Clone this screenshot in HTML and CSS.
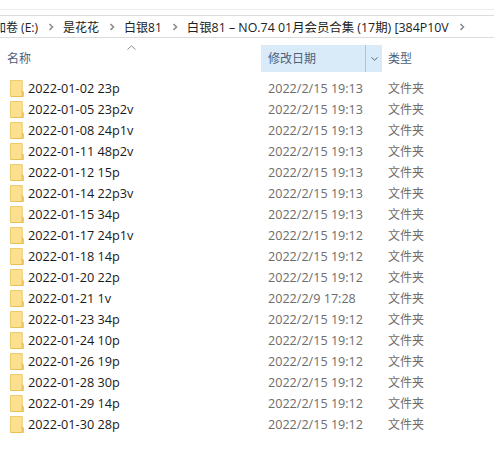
FILE: index.html
```html
<!DOCTYPE html>
<html lang="zh">
<head>
<meta charset="utf-8">
<title>文件夹</title>
<link rel="stylesheet" href="styles.css">
</head>
<body>
<svg class="defs" width="0" height="0" aria-hidden="true">
  <symbol id="folder" viewBox="0 0 14 17">
    <path d="M.5 .5H12.2V16.5H.5Z" fill="#fce08f" stroke="#eccb6b"/>
    <path d="M12.2 10.5L13.5 12V16.5H12.2Z" fill="#f6d36f" stroke="#e2bb55" stroke-width=".7"/>
    <path d="M1 16H13V17H1Z" fill="#eabf52"/>
  </symbol>
  <symbol id="sep" viewBox="0 0 6 8">
    <path d="M1.5 1L4.5 4L1.5 7" fill="none" stroke="#8b8b8b" stroke-width="1.6"/>
  </symbol>
</svg>
<div class="topline"></div>
<nav class="crumbs">
  <span class="crumb first">新加卷 (E:)</span>
  <svg class="sep"><use href="#sep"/></svg>
  <span class="crumb">是花花</span>
  <svg class="sep"><use href="#sep"/></svg>
  <span class="crumb">白银81</span>
  <svg class="sep"><use href="#sep"/></svg>
  <span class="crumb long">白银81 – NO.74 01月会员合集 (17期) [384P10V</span>
  <svg class="sep"><use href="#sep"/></svg>
</nav>
<main class="list">
  <div class="sort-arrow"><svg width="9" height="5" viewBox="0 0 9 5"><path d="M.5 4.5L4.5 .8L8.5 4.5" fill="none" stroke="#8d8d8d"/></svg></div>
  <header class="head">
    <div class="h-name">名称</div>
    <div class="h-date"><span class="h-date-label">修改日期</span><span class="h-drop"><svg width="7" height="4" viewBox="0 0 7 4"><path d="M.5 .5L3.5 3.2L6.5 .5" fill="none" stroke="#5c6b7a"/></svg></span></div>
    <div class="h-type">类型</div>
  </header>
  <div class="rows">
    <div class="row"><svg class="ico"><use href="#folder"/></svg><span class="name">2022-01-02 23p</span><span class="date">2022/2/15 19:13</span><span class="type">文件夹</span></div>
    <div class="row"><svg class="ico"><use href="#folder"/></svg><span class="name">2022-01-05 23p2v</span><span class="date">2022/2/15 19:13</span><span class="type">文件夹</span></div>
    <div class="row"><svg class="ico"><use href="#folder"/></svg><span class="name">2022-01-08 24p1v</span><span class="date">2022/2/15 19:13</span><span class="type">文件夹</span></div>
    <div class="row"><svg class="ico"><use href="#folder"/></svg><span class="name">2022-01-11 48p2v</span><span class="date">2022/2/15 19:13</span><span class="type">文件夹</span></div>
    <div class="row"><svg class="ico"><use href="#folder"/></svg><span class="name">2022-01-12 15p</span><span class="date">2022/2/15 19:13</span><span class="type">文件夹</span></div>
    <div class="row"><svg class="ico"><use href="#folder"/></svg><span class="name">2022-01-14 22p3v</span><span class="date">2022/2/15 19:13</span><span class="type">文件夹</span></div>
    <div class="row"><svg class="ico"><use href="#folder"/></svg><span class="name">2022-01-15 34p</span><span class="date">2022/2/15 19:13</span><span class="type">文件夹</span></div>
    <div class="row"><svg class="ico"><use href="#folder"/></svg><span class="name">2022-01-17 24p1v</span><span class="date">2022/2/15 19:12</span><span class="type">文件夹</span></div>
    <div class="row"><svg class="ico"><use href="#folder"/></svg><span class="name">2022-01-18 14p</span><span class="date">2022/2/15 19:12</span><span class="type">文件夹</span></div>
    <div class="row"><svg class="ico"><use href="#folder"/></svg><span class="name">2022-01-20 22p</span><span class="date">2022/2/15 19:12</span><span class="type">文件夹</span></div>
    <div class="row"><svg class="ico"><use href="#folder"/></svg><span class="name">2022-01-21 1v</span><span class="date">2022/2/9 17:28</span><span class="type">文件夹</span></div>
    <div class="row"><svg class="ico"><use href="#folder"/></svg><span class="name">2022-01-23 34p</span><span class="date">2022/2/15 19:12</span><span class="type">文件夹</span></div>
    <div class="row"><svg class="ico"><use href="#folder"/></svg><span class="name">2022-01-24 10p</span><span class="date">2022/2/15 19:12</span><span class="type">文件夹</span></div>
    <div class="row"><svg class="ico"><use href="#folder"/></svg><span class="name">2022-01-26 19p</span><span class="date">2022/2/15 19:12</span><span class="type">文件夹</span></div>
    <div class="row"><svg class="ico"><use href="#folder"/></svg><span class="name">2022-01-28 30p</span><span class="date">2022/2/15 19:12</span><span class="type">文件夹</span></div>
    <div class="row"><svg class="ico"><use href="#folder"/></svg><span class="name">2022-01-29 14p</span><span class="date">2022/2/15 19:12</span><span class="type">文件夹</span></div>
    <div class="row"><svg class="ico"><use href="#folder"/></svg><span class="name">2022-01-30 28p</span><span class="date">2022/2/15 19:12</span><span class="type">文件夹</span></div>
  </div>
</main>
</body>
</html>
```
FILE: styles.css
```css
* { box-sizing: border-box; }
html, body { margin: 0; height: 100%; overflow: hidden; background: #fff; }
body {
  font-family: "Open Sans", "Noto Sans CJK SC", sans-serif;
  font-size: 12px;
  color: #1a1a1a;
}
.defs { position: absolute; }
.topline { height: 10px; border-bottom: 1px solid #ececec; }
.crumbs {
  margin-top: 5px;
  height: 23px;
  border-top: 1px solid #dcdcdc;
  border-bottom: 1px solid #dcdcdc;
  display: flex;
  align-items: center;
  white-space: nowrap;
  overflow: hidden;
  color: #222;
}
.crumb.first { margin-left: -18px; }
.crumb.long { font-size: 12.4px; }
.sep { width: 6px; height: 8px; margin: 0 9px 0 10px; flex: none; }
.list { position: relative; padding-top: 7px; }
.sort-arrow { position: absolute; left: 127px; top: 7px; line-height: 0; }
.head {
  height: 27px;
  display: flex;
  color: #4c607a;
}
.h-name { width: 261px; padding-left: 7px; line-height: 27px; }
.h-date { width: 121px; display: flex; background: #d9ebf9; line-height: 27px; }
.h-date-label { width: 105px; padding-left: 7px; border-right: 1px solid #a9c4da; }
.h-drop { flex: 1; display: flex; align-items: center; justify-content: center; }
.h-type { padding-left: 6px; line-height: 27px; }
.rows { margin-top: 6px; }
.row { height: 21px; display: flex; align-items: center; }
.ico { width: 14px; height: 17px; margin-left: 10px; flex: none; }
.name { width: 244px; padding-left: 4px; font-size: 12.7px; line-height: 17px; color: #1a1a1a; }
.date { width: 120px; font-size: 12.6px; line-height: 17px; color: #6d6d6d; }
.type { line-height: 17px; color: #6d6d6d; }
```
